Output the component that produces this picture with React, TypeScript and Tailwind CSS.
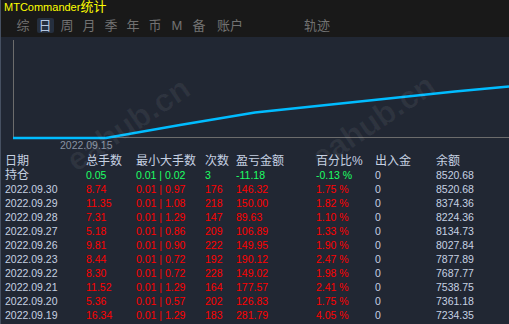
const tabs = ["综", "日", "周", "月", "季", "年", "币", "M", "备"]

type Row = {
  date: string
  lots: string
  minMax: [string, string]
  count: string
  pl: string
  pct: string
  cash: string
  balance: string
}

const rows: Row[] = [
  { date: "2022.09.30", lots: "8.74", minMax: ["0.01", "0.97"], count: "176", pl: "146.32", pct: "1.75 %", cash: "0", balance: "8520.68" },
  { date: "2022.09.29", lots: "11.35", minMax: ["0.01", "1.08"], count: "218", pl: "150.00", pct: "1.82 %", cash: "0", balance: "8374.36" },
  { date: "2022.09.28", lots: "7.31", minMax: ["0.01", "1.29"], count: "147", pl: "89.63", pct: "1.10 %", cash: "0", balance: "8224.36" },
  { date: "2022.09.27", lots: "5.18", minMax: ["0.01", "0.86"], count: "209", pl: "106.89", pct: "1.33 %", cash: "0", balance: "8134.73" },
  { date: "2022.09.26", lots: "9.81", minMax: ["0.01", "0.90"], count: "222", pl: "149.95", pct: "1.90 %", cash: "0", balance: "8027.84" },
  { date: "2022.09.23", lots: "8.44", minMax: ["0.01", "0.72"], count: "192", pl: "190.12", pct: "2.47 %", cash: "0", balance: "7877.89" },
  { date: "2022.09.22", lots: "8.30", minMax: ["0.01", "0.72"], count: "228", pl: "149.02", pct: "1.98 %", cash: "0", balance: "7687.77" },
  { date: "2022.09.21", lots: "11.52", minMax: ["0.01", "1.29"], count: "164", pl: "177.57", pct: "2.41 %", cash: "0", balance: "7538.75" },
  { date: "2022.09.20", lots: "5.36", minMax: ["0.01", "0.57"], count: "202", pl: "126.83", pct: "1.75 %", cash: "0", balance: "7361.18" },
  { date: "2022.09.19", lots: "16.34", minMax: ["0.01", "1.29"], count: "183", pl: "281.79", pct: "4.05 %", cash: "0", balance: "7234.35" },
]

const grid = "grid grid-cols-[81px_50px_69px_31px_80px_59px_61px_1fr] pl-[4px] h-[14px] leading-[14px] whitespace-nowrap"

// equity curve, chart-local coords (chart starts at page x=1, y=37)
const curve = [
  [12, 101], [105, 101], [179, 88], [254, 75.5], [354, 65], [454, 54.5], [508, 49.5],
]

export default function App() {
  return (
    <div
      className="relative w-[509px] h-[324px] overflow-hidden bg-[#212733] border-l border-[#465061]"
      style={{ fontFamily: '"Liberation Sans", "Noto Sans CJK SC", sans-serif' }}
    >
      {/* HEADER */}
      <div className="h-[37px] bg-[#191919]">
        <div className="h-[14px] pl-[3px] leading-[14px] text-[#ffff00] text-[11px]">
          MTCommander<span className="text-[13px]">统计</span>
        </div>

        <div className="flex items-center h-[23px] pl-[11px] text-[13px] text-[#727272]">
          {tabs.map((t, i) => (
            <div key={t} className="w-[22px] flex justify-center">
              <span
                className={
                  i === 1
                    ? "w-[17px] h-[15px] leading-[15px] text-center rounded-[2px] bg-[#252f3e] text-[#b4c6e0]"
                    : "h-[15px] leading-[15px]"
                }
              >
                {t}
              </span>
            </div>
          ))}
          <div className="w-[40px] text-center">账户</div>
          <div className="w-[40px] ml-[47px] text-center">轨迹</div>
        </div>
      </div>

      {/* CHART */}
      <div className="relative h-[113px]">
        <svg width="508" height="113" className="absolute left-0 top-0">
          <line x1="12.5" y1="3" x2="12.5" y2="100.5" stroke="#6c6c6c" strokeWidth="1" />
          <line x1="12.5" y1="100.5" x2="508" y2="100.5" stroke="#6c6c6c" strokeWidth="1" />
          <polyline
            points={curve.map(p => p.join(",")).join(" ")}
            fill="none"
            stroke="#00bcff"
            strokeWidth="2.6"
          />
        </svg>
        <div className="absolute left-[59px] top-[102px] text-[10.5px] leading-[12px] text-[#8791a2]">
          2022.09.15
        </div>
      </div>

      {/* TABLE */}
      <div className="pt-[4px] text-[10.5px]">
        <div className={grid + " text-[12px] text-[#c6d1e2]"}>
          <div>日期</div>
          <div>总手数</div>
          <div>最小大手数</div>
          <div>次数</div>
          <div>盈亏金额</div>
          <div>百分比%</div>
          <div>出入金</div>
          <div>余额</div>
        </div>

        <div className={grid}>
          <div className="text-[12px] text-[#c6d1e2]">持仓</div>
          <div className="text-[#1eff64]">0.05</div>
          <div className="text-[#1eff64]">0.01 | 0.02</div>
          <div className="text-[#1eff64]">3</div>
          <div className="text-[#1eff64]">-11.18</div>
          <div className="text-[#1eff64]">-0.13 %</div>
          <div className="text-[#c6d1e2]">0</div>
          <div className="text-[#c6d1e2]">8520.68</div>
        </div>

        {rows.map(r => (
          <div key={r.date} className={grid}>
            <div className="text-[#c6d1e2]">{r.date}</div>
            <div className="text-[#ff0000]">{r.lots}</div>
            <div className="text-[#ff0000]">{r.minMax[0]} | {r.minMax[1]}</div>
            <div className="text-[#ff0000]">{r.count}</div>
            <div className="text-[#ff0000]">{r.pl}</div>
            <div className="text-[#ff0000]">{r.pct}</div>
            <div className="text-[#c6d1e2]">{r.cash}</div>
            <div className="text-[#c6d1e2]">{r.balance}</div>
          </div>
        ))}
      </div>

      {/* watermark */}
      <div className="absolute left-[127px] top-[124px] pointer-events-none">
        <div className="-translate-x-1/2 -translate-y-1/2 -rotate-[34deg] text-[32px] font-bold text-white/[0.06] whitespace-nowrap">
          eahub.cn
        </div>
      </div>
      <div className="absolute left-[372px] top-[121px] pointer-events-none">
        <div className="-translate-x-1/2 -translate-y-1/2 -rotate-[34deg] text-[32px] font-bold text-white/[0.06] whitespace-nowrap">
          eahub.cn
        </div>
      </div>
    </div>
  )
}
